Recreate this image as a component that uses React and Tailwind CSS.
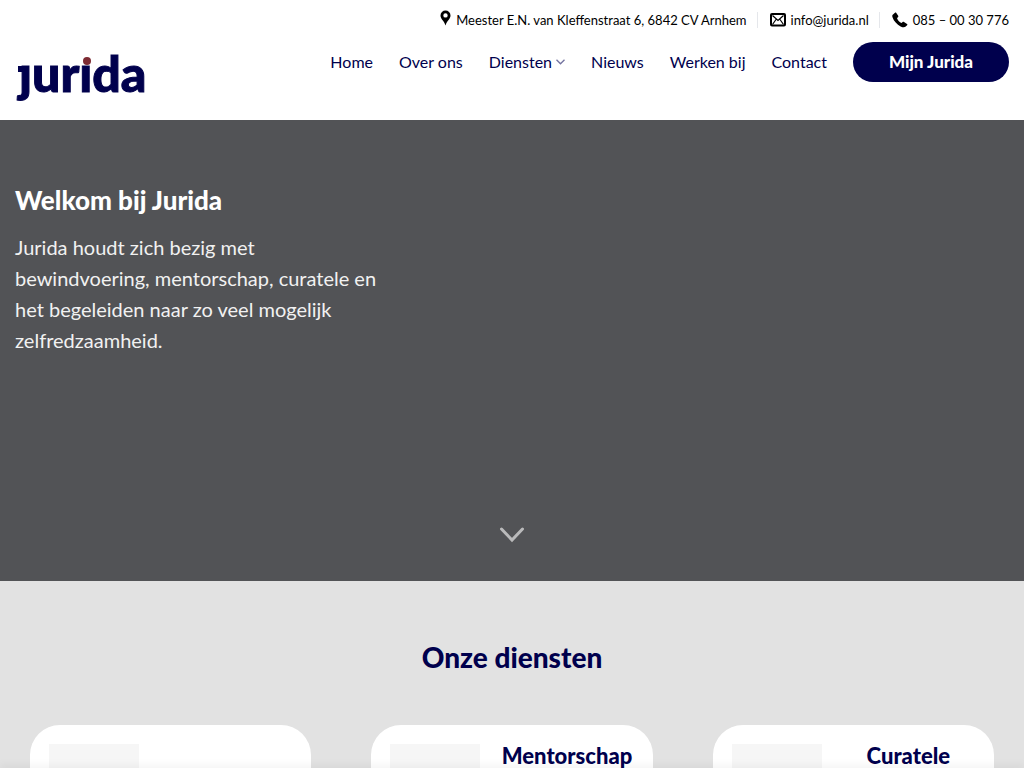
import React from "react";

const navItems = [
  { label: "Home" },
  { label: "Over ons" },
  { label: "Diensten", hasMenu: true },
  { label: "Nieuws" },
  { label: "Werken bij" },
  { label: "Contact" },
];

const services = [
  { id: "bewindvoering", title: "" },
  { id: "mentorschap", title: "Mentorschap" },
  { id: "curatele", title: "Curatele" },
];

function Logo() {
  return (
    <svg width="134" height="50" viewBox="0 0 134 50" className="overflow-visible" aria-hidden="true">
      <text
        x="4"
        y="36"
        fontSize="50"
        stroke="#00004d"
        strokeWidth="1"
        className="fill-[#00004d] font-[Lato] font-black"
      >
        ȷurıda
      </text>
      <rect x="3" y="10" width="10" height="6" fill="#00004d" />
      <circle cx="72" cy="5" r="4" fill="#7d2b33" />
    </svg>
  );
}

function PinIcon() {
  return (
    <svg width="11" height="16" viewBox="0 0 11 16" className="mb-1" aria-hidden="true">
      <path
        fillRule="evenodd"
        d="M5.5 0.5A5 5 0 0 0 0.5 5.5C0.5 9 4 10.5 5.5 15.5C7 10.5 10.5 9 10.5 5.5A5 5 0 0 0 5.5 0.5ZM5.5 3.2a2.2 2.2 0 1 1 0 4.4a2.2 2.2 0 0 1 0-4.4Z"
      />
    </svg>
  );
}

function MailIcon() {
  return (
    <svg width="16" height="14" viewBox="0 0 16 14" fill="none" stroke="#000" aria-hidden="true">
      <rect x="1" y="1" width="14" height="11.5" rx="1" strokeWidth="2" />
      <path d="M2.5 2.5L8 7.5L13.5 2.5M2.5 11.5L6 6.5M13.5 11.5L10 6.5" strokeWidth="1.2" />
    </svg>
  );
}

function PhoneIcon() {
  return (
    <svg width="16" height="16" viewBox="0 0 16 16" aria-hidden="true">
      <path d="M1 2.6L3 0.8C3.5 0.4 4 0.5 4.3 1L6.2 3.8C6.5 4.3 6.4 4.8 6 5.2L5 6.1C5.4 8.2 7.5 10.3 9.6 11L10.6 10C11 9.6 11.5 9.6 12 9.9L15 11.9C15.5 12.2 15.5 12.8 15.1 13.2L13.4 14.8C12.5 15.6 10.6 15.4 8.6 14.4C5 12.6 1.8 9.2 0.6 5.6C0.1 4.2 0.1 3.3 1 2.6Z" />
    </svg>
  );
}

function TopBar() {
  return (
    <ul className="flex h-10 items-center justify-end whitespace-nowrap text-[13px] leading-4 text-black">
      <li className="pr-[10px]">
        <a href="#adres" className="flex items-center gap-[5px]">
          <PinIcon />
          Meester E.N. van Kleffenstraat 6, 6842 CV Arnhem
        </a>
      </li>
      <li className="border-l border-gray-200 pr-[10px] pl-3">
        <a href="mailto:info@jurida.nl" className="flex items-center gap-[5px]">
          <MailIcon />
          info@jurida.nl
        </a>
      </li>
      <li className="border-l border-gray-200 pl-3">
        <a href="tel:0850030776" className="flex items-center gap-[5px]">
          <PhoneIcon />
          085 – 00 30 776
        </a>
      </li>
    </ul>
  );
}

function Header() {
  return (
    <header className="h-[120px] shrink-0 bg-white px-[15px]">
      <TopBar />
      <div className="flex items-start justify-between">
        <a href="#home" aria-label="Jurida" className="pt-4">
          <Logo />
        </a>
        <nav className="flex items-center gap-[26px] pt-[2px] text-base leading-5 text-[#00004d]">
          {navItems.map((item) => (
            <a
              key={item.label}
              href={`#${item.label.toLowerCase().replace(" ", "-")}`}
              className="flex items-center gap-1 whitespace-nowrap"
            >
              {item.label}
              {item.hasMenu && (
                <svg width="9" height="6" viewBox="0 0 9 6" fill="none" stroke="#7373a0" strokeWidth="1.3" aria-hidden="true">
                  <path d="M0.5 0.7L4.5 4.8L8.5 0.7" />
                </svg>
              )}
            </a>
          ))}
          <button className="h-10 w-[156px] rounded-full bg-[#00004d] text-[17px] font-black text-white">
            Mijn Jurida
          </button>
        </nav>
      </div>
    </header>
  );
}

function Hero() {
  return (
    <section className="relative h-[60vh] shrink-0 bg-[#525356] px-[15px] pt-16">
      <h1 className="text-[26px] leading-8 font-black text-white">Welkom bij Jurida</h1>
      <p className="mt-4 max-w-[370px] text-[20px] leading-[31px] text-[#f1f1f1]">
        Jurida houdt zich bezig met bewindvoering, mentorschap, curatele en het
        begeleiden naar zo veel mogelijk zelfredzaamheid.
      </p>
      <button
        aria-label="Naar beneden"
        className="absolute inset-x-0 bottom-8 mx-auto flex h-7 w-7 items-center justify-center"
      >
        <svg width="26" height="18" viewBox="0 0 26 18" fill="none" stroke="#bababb" strokeWidth="3" strokeLinecap="round" aria-hidden="true">
          <path d="M2.5 3L13 14L23.5 3" />
        </svg>
      </button>
    </section>
  );
}

function ServiceCard({ title }) {
  return (
    <article className="flex h-[280px] gap-5 rounded-[30px] bg-white p-[19px]">
      <div className="h-[90px] w-[90px] shrink-0 bg-[#f6f6f6]" />
      {title && (
        <h3 className="flex-1 text-center text-[22px] leading-6 font-black text-[#00004d]">
          {title}
        </h3>
      )}
    </article>
  );
}

export default function App() {
  return (
    <div className="flex h-screen flex-col overflow-hidden font-[Lato,sans-serif]">
      <Header />
      <Hero />
      <section className="min-h-0 flex-1 overflow-hidden bg-[#e2e2e2] px-[30px] pt-[60px]">
        <h2 className="text-center text-[28px] leading-8 font-black text-[#00004d]">
          Onze diensten
        </h2>
        <div className="mt-[52px] grid grid-cols-3 gap-[60px]">
          {services.map((service) => (
            <ServiceCard key={service.id} title={service.title} />
          ))}
        </div>
      </section>
      {/* top shadow of the bar parked under the window edge */}
      <div className="fixed inset-x-0 bottom-0 h-px translate-y-full shadow-[0_0_9px_rgba(0,0,0,0.35)]" />
    </div>
  );
}
